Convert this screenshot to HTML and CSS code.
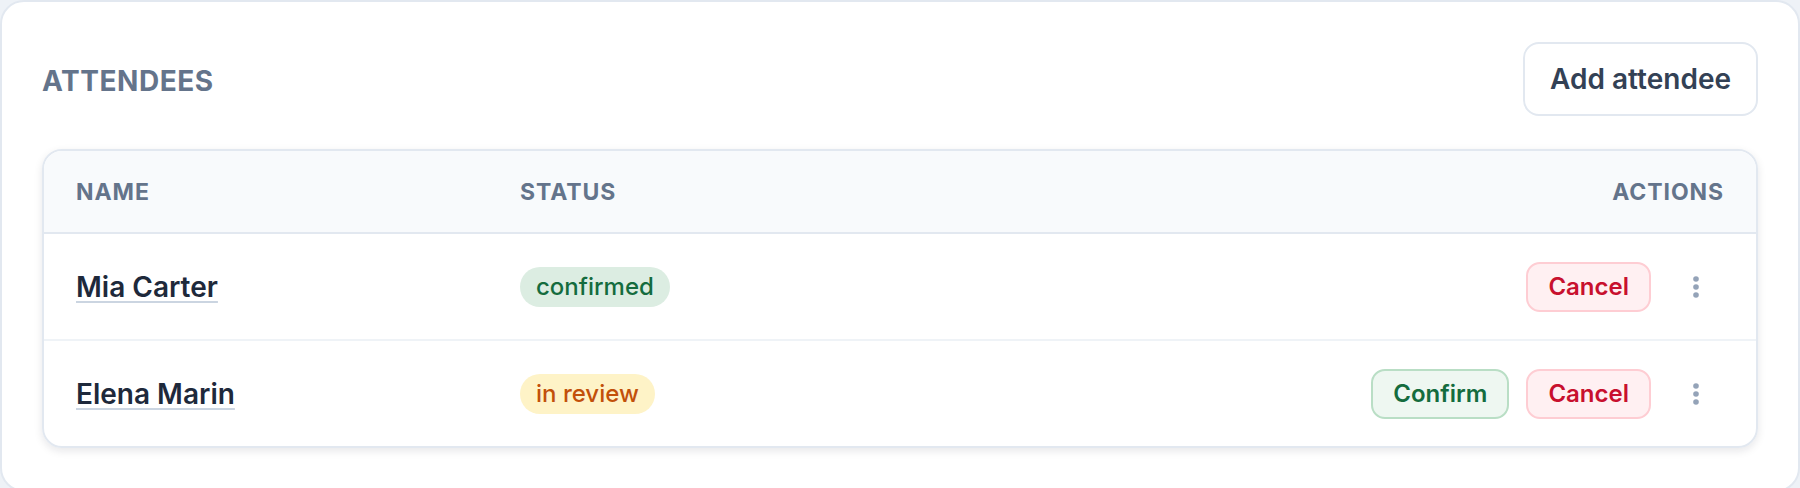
FILE: index.html
```html
<!DOCTYPE html>
<html lang="en">
  <head>
    <meta charset="UTF-8" />
    <meta name="viewport" content="width=device-width, initial-scale=1.0" />
    <title>Attendees</title>
    <link rel="stylesheet" href="styles.css">
  </head>
  <body>
    <section class="panel">
      <div class="panel-head">
        <h2>Attendees</h2>
        <button class="add-btn">Add attendee</button>
      </div>

      <div class="table">
        <div class="row head">
          <span>Name</span>
          <span>Status</span>
          <span class="right">Actions</span>
        </div>

        <div class="row">
          <a href="#" class="name">Mia Carter</a>
          <div><span class="badge ok">confirmed</span></div>
          <div class="actions">
            <button class="btn cancel">Cancel</button>
            <button class="more" aria-label="More">
              <svg width="6" height="22" viewBox="0 0 6 22"><circle cx="3" cy="3" r="2.8"/><circle cx="3" cy="11" r="2.8"/><circle cx="3" cy="19" r="2.8"/></svg>
            </button>
          </div>
        </div>

        <div class="row">
          <a href="#" class="name">Elena Marin</a>
          <div><span class="badge review">in review</span></div>
          <div class="actions">
            <button class="btn confirm">Confirm</button>
            <button class="btn cancel">Cancel</button>
            <button class="more" aria-label="More">
              <svg width="6" height="22" viewBox="0 0 6 22"><circle cx="3" cy="3" r="2.8"/><circle cx="3" cy="11" r="2.8"/><circle cx="3" cy="19" r="2.8"/></svg>
            </button>
          </div>
        </div>
      </div>
    </section>
  </body>
</html>
```

FILE: styles.css
```css
* {
  margin: 0;
  padding: 0;
  box-sizing: border-box;
}

body {
  font-family: Inter, "Noto Sans", sans-serif;
  background-color: #eef2f7;
}

.panel {
  background-color: #fff;
  border: 2px solid #e2e8f0;
  border-radius: 24px;
  padding: 40px 40px 42px;
  min-height: 488px;
}

.panel-head {
  display: flex;
  justify-content: space-between;
  align-items: center;
  margin-bottom: 33px;
}

.panel-head h2 {
  padding-top: 4px;
  font-size: 28px;
  font-weight: 700;
  letter-spacing: 0.02em;
  text-transform: uppercase;
  color: #64748b;
}

.add-btn {
  font-family: inherit;
  font-size: 28px;
  font-weight: 600;
  line-height: 34px;
  color: #334155;
  background-color: #fff;
  border: 2px solid #e2e8f0;
  border-radius: 16px;
  padding: 18px 25px;
  cursor: pointer;
}

.table {
  border: 2px solid #e2e8f0;
  border-radius: 20px;
  overflow: hidden;
  box-shadow: 0 3px 8px rgba(15, 23, 42, 0.1);
}

.row {
  display: grid;
  grid-template-columns: 412px 1fr auto;
  column-gap: 32px;
  align-items: center;
  padding: 28px 32px 27px;
  border-top: 2px solid #eff3f7;
}

.row.head {
  background-color: #f8fafc;
  border-top: none;
  border-bottom: 2px solid #e2e8f0;
  padding: 27px 32px 26px;
  font-size: 23px;
  font-weight: 700;
  line-height: 28px;
  letter-spacing: 0.04em;
  text-transform: uppercase;
  color: #64748b;
}

.row.head + .row {
  border-top: none;
}

.right {
  text-align: right;
}

.name {
  justify-self: start;
  font-size: 28px;
  font-weight: 600;
  color: #1e293b;
  text-decoration: underline;
  text-decoration-color: #cbd5e1;
  text-decoration-thickness: 2px;
  text-underline-offset: 4px;
}

.badge {
  display: inline-block;
  font-size: 24px;
  font-weight: 500;
  line-height: 28px;
  padding: 6px 16px;
  border-radius: 20px;
}

.badge.ok {
  background-color: #dcede2;
  color: #146c3e;
}

.badge.review {
  background-color: #fef3c7;
  color: #c2500a;
}

.actions {
  display: flex;
  align-items: center;
  justify-content: flex-end;
  gap: 17px;
}

.btn {
  font-family: inherit;
  font-size: 24px;
  font-weight: 600;
  line-height: 28px;
  padding: 9px 20px;
  border-radius: 14px;
  border: 2px solid;
  cursor: pointer;
}

.cancel {
  background-color: #fff0f2;
  border-color: #fecdd3;
  color: #c8102e;
}

.confirm {
  background-color: #eef7f1;
  border-color: #b9dec5;
  color: #146c3e;
}

.more {
  width: 56px;
  height: 50px;
  border: none;
  background: none;
  display: flex;
  align-items: center;
  justify-content: center;
  fill: #94a3b8;
  cursor: pointer;
}
```
